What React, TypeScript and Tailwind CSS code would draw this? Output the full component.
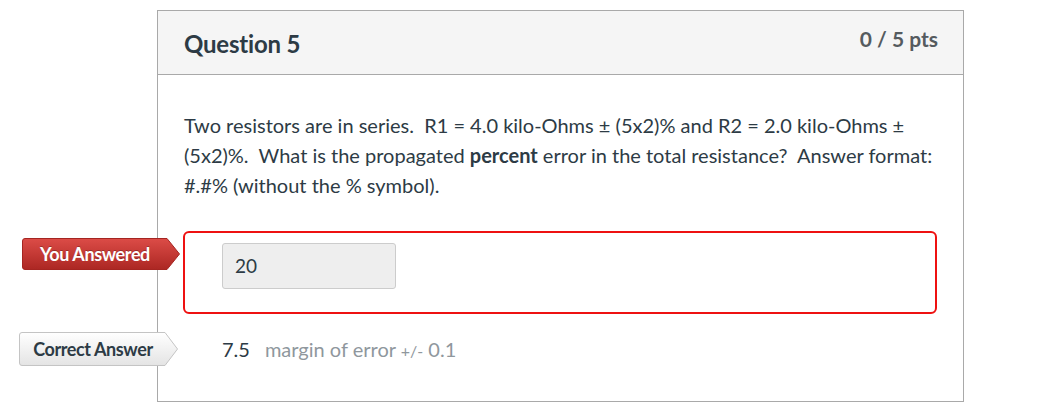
import React from 'react';

const YouAnsweredBadge: React.FC = () => (
  <div className="absolute left-[-161px] top-[7px] h-[32px] w-[158px]">
    <svg className="absolute inset-0" width="158" height="32" viewBox="0 0 158 32">
      <defs>
        <linearGradient id="redGrad" x1="0" y1="0" x2="0" y2="1">
          <stop offset="0" stopColor="#dc4c47" />
          <stop offset="1" stopColor="#ac2723" />
        </linearGradient>
      </defs>
      <path d="M3 0.5 H145 L157.5 16 L145 31.5 H3 Q0.5 31.5 0.5 29 V3 Q0.5 0.5 3 0.5 Z" fill="url(#redGrad)" stroke="#a52521" />
    </svg>
    <span className="relative flex h-full w-[146px] items-center justify-center text-[18px] font-bold tracking-[-0.4px] text-white [text-shadow:0_-1px_0_rgba(0,0,0,0.25)]">
      You Answered
    </span>
  </div>
);

const CorrectBadge: React.FC = () => (
  <div className="absolute left-[-164px] top-[0px] h-[34px] w-[159px]">
    <svg className="absolute inset-0" width="159" height="34" viewBox="0 0 159 34">
      <defs>
        <linearGradient id="greyGrad" x1="0" y1="0" x2="0" y2="1">
          <stop offset="0" stopColor="#ffffff" />
          <stop offset="1" stopColor="#e4e4e4" />
        </linearGradient>
      </defs>
      <path d="M3 0.5 H146 L158.5 17 L146 33.5 H3 Q0.5 33.5 0.5 31 V3 Q0.5 0.5 3 0.5 Z" fill="url(#greyGrad)" stroke="#c4c4c4" />
    </svg>
    <span className="relative flex h-full w-[148px] items-center justify-center text-[18px] font-bold tracking-[-0.4px] text-[#2d3b45]">
      Correct Answer
    </span>
  </div>
);

export default function App() {
  return (
    <div className="min-h-[407px] bg-white font-['Lato','Liberation_Sans',sans-serif] text-[#2d3b45]">
      <div className="ml-[157px] pt-[10px]">
        <div className="w-[807px] border border-[#a9a9a9]">
          <div className="flex h-[64px] items-start justify-between border-b border-[#a9a9a9] bg-[#f5f5f5] pl-[26px] pr-[25px]">
            <h2 className="mt-[18px] text-[24px] font-bold leading-[30px] tracking-[-0.2px]">Question 5</h2>
            <span className="mt-[14px] text-[21px] font-bold leading-[28px] text-[#555b5f]">0 / 5 pts</span>
          </div>
          <div className="px-[25px] pb-[36px] pt-[35px]">
            <p className="pl-[1px] text-[20px] leading-[30px]">
              Two resistors are in series.&nbsp; R1 = 4.0 kilo-Ohms ± (5x2)% and R2 = 2.0 kilo-Ohms ± (5x2)%.&nbsp; What is the propagated <strong className="font-bold">percent</strong> error in the total resistance?&nbsp; Answer format: #.#% (without the % symbol).
            </p>
            <div className="relative mt-[31px]">
              <YouAnsweredBadge />
              <div className="h-[83px] w-[754px] rounded-[6px] border-2 border-[#ee1111] pl-[37px] pt-[10px]">
                <div className="flex h-[46px] w-[174px] items-center rounded-[3px] border border-[#cccccc] bg-[#eeeeee] pl-[12px] text-[19px]">
                  20
                </div>
              </div>
            </div>
            <div className="relative mt-[18px] flex h-[33px] items-center pl-[39px] text-[20px]">
              <CorrectBadge />
              <span>7.5</span>
              <span className="ml-[15px] text-[#8f979d]">
                margin of error <span className="text-[16px]">+/-</span> 0.1
              </span>
            </div>
          </div>
        </div>
      </div>
    </div>
  );
}
